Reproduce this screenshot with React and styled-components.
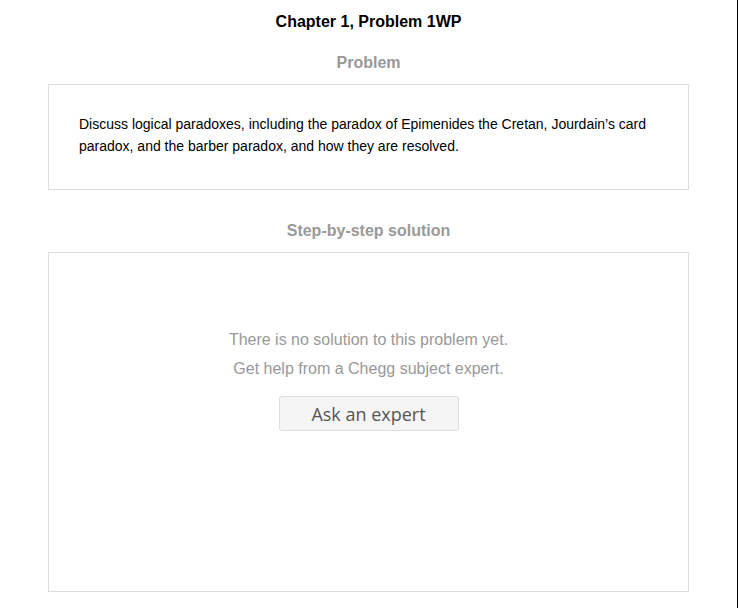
import React from 'react';
import styled, { createGlobalStyle } from 'styled-components';

const GlobalStyle = createGlobalStyle`
  html, body {
    margin: 0;
    padding: 0;
    background: #fff;
  }
  body {
    font-family: "Liberation Sans", Arial, sans-serif;
  }
`;

const Page = styled.div`
  width: 737px;
  min-height: 608px;
  border-right: 1px solid #000;
  display: flex;
  flex-direction: column;
  align-items: center;
`;

const Title = styled.h1`
  margin: 12px 0 0;
  font-size: 16px;
  line-height: 20px;
  font-weight: bold;
  color: #000;
`;

const SectionTitle = styled.h2`
  margin: ${p => p.$top}px 0 0;
  font-size: 16px;
  line-height: 20px;
  font-weight: bold;
  color: #999;
`;

const Card = styled.div`
  box-sizing: border-box;
  width: 641px;
  margin-top: 11px;
  border: 1px solid #ddd;
  background: #fff;
`;

const ProblemCard = styled(Card)`
  height: 106px;
  padding: 28px 30px 0;
  font-size: 14px;
  line-height: 22px;
  color: #000;
`;

const SolutionCard = styled(Card)`
  height: 340px;
  padding-top: 72px;
  display: flex;
  flex-direction: column;
  align-items: center;
`;

const Note = styled.p`
  margin: 0;
  font-size: 16px;
  line-height: 29px;
  color: #999;
`;

const AskButton = styled.button`
  margin-top: 13px;
  width: 180px;
  height: 35px;
  border: 1px solid #ddd;
  border-radius: 3px;
  background: #f5f5f5;
  color: #555;
  font-family: "Open Sans", "Noto Sans", sans-serif;
  font-size: 18px;
  padding: 0;
  cursor: pointer;
`;

export default function App() {
  return (
    <>
      <GlobalStyle />
      <Page>
        <Title>Chapter 1, Problem 1WP</Title>
        <SectionTitle $top={21}>Problem</SectionTitle>
        <ProblemCard>
          Discuss logical paradoxes, including the paradox of Epimenides the Cretan, Jourdain’s card paradox, and the barber paradox, and how they are resolved.
        </ProblemCard>
        <SectionTitle $top={31}>Step-by-step solution</SectionTitle>
        <SolutionCard>
          <Note>There is no solution to this problem yet.</Note>
          <Note>Get help from a Chegg subject expert.</Note>
          <AskButton>Ask an expert</AskButton>
        </SolutionCard>
      </Page>
    </>
  );
}
